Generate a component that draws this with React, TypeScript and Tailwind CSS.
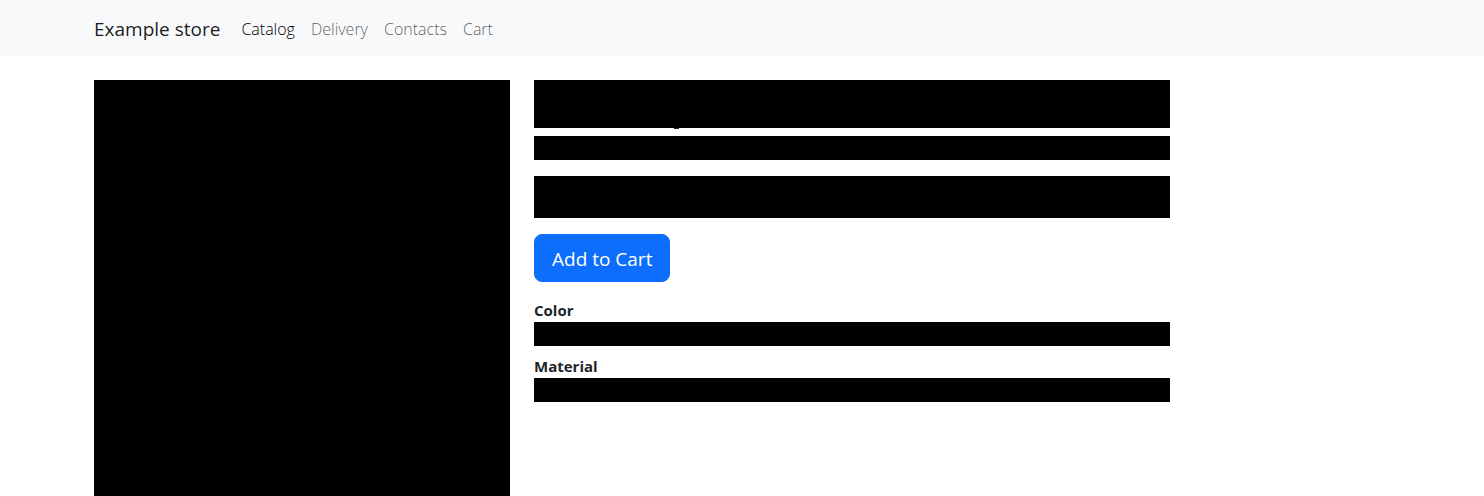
const links = [
  { label: "Catalog", current: true },
  { label: "Delivery", current: false },
  { label: "Contacts", current: false },
  { label: "Cart", current: false },
];

const specs = ["Color", "Material"];

function Navbar() {
  return (
    <nav className="bg-[#f8f9fa]">
      <div className="mx-auto flex h-14 max-w-[1320px] items-center gap-[21px] px-3 pt-px">
        <a href="#home" className="text-[19px] leading-[30px] text-black/90">
          Example store
        </a>
        <ul className="flex gap-4 text-base leading-6 font-light">
          {links.map((link) => (
            <li key={link.label}>
              <a
                href={"#" + link.label.toLowerCase()}
                aria-current={link.current ? "page" : undefined}
                className={link.current ? "text-black" : "text-black/65"}
              >
                {link.label}
              </a>
            </li>
          ))}
        </ul>
      </div>
    </nav>
  );
}

export default function App() {
  return (
    <div className="bg-white font-['Segoe_UI','Open_Sans',sans-serif] text-base leading-6 text-[#212529]">
      <Navbar />
      <main className="mx-auto mt-6 grid max-w-[1320px] grid-cols-12 items-start gap-6 px-3">
        <div className="col-span-4 aspect-square bg-black" />
        <section className="col-span-6">
          <div className="relative mb-2 h-12 bg-black">
            <span className="absolute top-full left-[22%] h-px w-[5px] bg-[#212529]" />
          </div>
          <div className="mb-4 h-6 bg-black" />
          <div className="mb-4 h-[42px] bg-black" />
          <button
            type="button"
            className="mb-4 block rounded-lg border border-[#0d6efd] bg-[#0d6efd] px-[17px] pt-[9px] pb-[7px] text-[19px] leading-[30px] text-white"
          >
            Add to Cart
          </button>
          <dl>
            {specs.map((name) => (
              <div key={name} className="mb-2">
                <dt className="text-[15px] leading-6 font-bold">{name}</dt>
                <dd className="h-6 bg-black" />
              </div>
            ))}
          </dl>
        </section>
      </main>
    </div>
  );
}
